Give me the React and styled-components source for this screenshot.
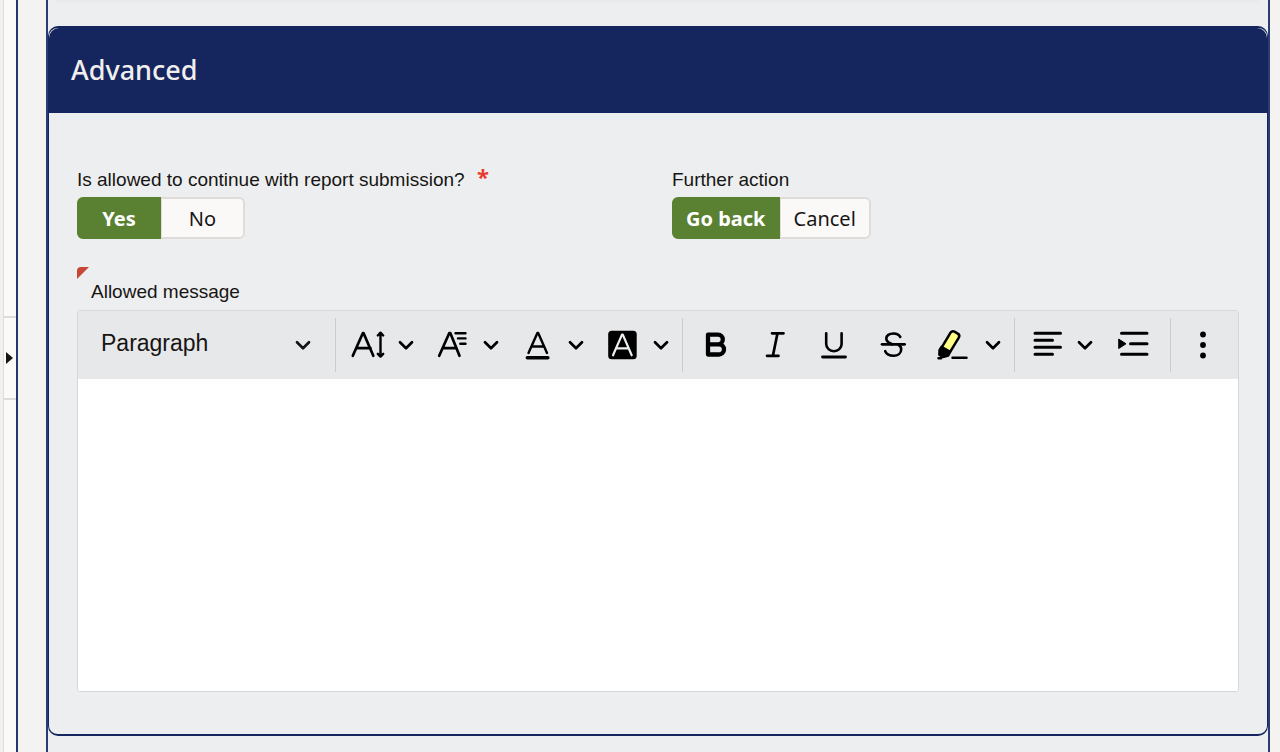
import React, { useState } from "react";
import styled, { createGlobalStyle, css } from "styled-components";

const navy = "#15255e";
const surface = "#edeef0";

const GlobalStyle = createGlobalStyle`
  *, *::before, *::after { box-sizing: border-box; }
  body {
    margin: 0;
    background: #f4f3f1;
    color: #161513;
    font-family: "Liberation Sans", Arial, sans-serif;
  }
`;

const Page = styled.div`
  display: flex;
  min-height: 100vh;
`;

const Splitter = styled.aside`
  flex: none;
  width: 16px;
  padding-top: 316px;
  padding-left: 3px;
  background: linear-gradient(to right, #f1f0ee 3px, #dddcd9 3px, #dddcd9 4px, #fbfaf8 4px);
`;

const Handle = styled.button`
  display: flex;
  align-items: center;
  width: 100%;
  height: 84px;
  padding: 0 0 0 2px;
  border: solid #dddcd9;
  border-width: 2px 0 2px 1px;
  background: #fbfaf8;
`;

const Main = styled.main`
  flex: 1;
  min-width: 0;
  padding: 0 10px 0 28px;
  border-left: 2px solid #26366c;
`;

const Region = styled.div`
  display: flow-root;
  min-height: 100vh;
  padding-bottom: 16px;
  border: solid #2c3b72;
  border-width: 0 2px;
  background: ${surface};
`;

const PreviousEdge = styled.div`
  height: 5px;
  margin: 0 8px 21px;
  background: linear-gradient(#e8e9eb, ${surface});
`;

const Card = styled.section`
  border: solid ${navy};
  border-width: 2px 1px;
  border-radius: 10px;
  background: ${surface};
`;

const CardHeader = styled.header`
  display: flex;
  align-items: center;
  height: 85px;
  padding: 0 22px 2px;
  border-radius: 10px 10px 0 0;
  background: ${navy};
`;

const Title = styled.h2`
  margin: 0;
  color: #f1efed;
  font: 500 27px/40px "Noto Sans", sans-serif;
`;

const CardBody = styled.form`
  padding: 55px 28px 42px;
`;

const FieldRow = styled.div`
  display: grid;
  grid-template-columns: 1fr 1fr;
  gap: 28px;
`;

const Field = styled.fieldset`
  min-width: 0;
  margin: 0;
  padding: 0;
  border: 0;
`;

const labelText = css`
  padding: 0;
  color: #161513;
  font-size: 19px;
  line-height: 24px;
`;

const Legend = styled.legend`
  ${labelText}
  margin-bottom: 5px;
`;

const Required = styled.span`
  margin-left: 7px;
  color: #e8392b;
  font: 700 22px/0 "Noto Sans", sans-serif;
  vertical-align: 1px;
`;

const Pills = styled.div`
  display: flex;
`;

const Pill = styled.label`
  display: flex;
  align-items: center;
  justify-content: center;
  min-width: 84px;
  height: 42px;
  padding: 2px ${(p) => (p.$first ? 12 : 13)}px 0;
  border: 2px solid ${(p) => (p.$checked ? "#5a8132" : "#dfdcd9")};
  border-left-width: ${(p) => (p.$first ? 2 : 1)}px;
  border-radius: ${(p) => (p.$first ? "6px 0 0 6px" : "0 6px 6px 0")};
  background: ${(p) => (p.$checked ? "#5a8132" : "#fbf9f8")};
  color: ${(p) => (p.$checked ? "#fff" : "#161513")};
  font: ${(p) => (p.$checked ? 700 : 400)} 20px/28px "Noto Sans", sans-serif;
  cursor: pointer;
`;

const HiddenRadio = styled.input`
  position: absolute;
  opacity: 0;
  pointer-events: none;
`;

const MessageField = styled.div`
  padding-top: 28px;
`;

const RequiredCorner = styled.div`
  width: 12px;
  height: 12px;
  border-radius: 4px 0 0 0;
  background: #c74634;
  clip-path: polygon(0 0, 100% 0, 0 100%);
`;

const MessageLabel = styled.label`
  ${labelText}
  display: block;
  margin: 1px 14px 6px;
`;

const Editor = styled.div`
  overflow: hidden;
  border: 1px solid #d6d7d9;
  border-radius: 3px;
  background: #fff;
`;

const Toolbar = styled.div`
  display: flex;
  height: 68px;
  padding: 7px 0;
  background: #e7e8ea;
`;

const Group = styled.div`
  display: flex;
  height: 54px;
  padding: 0 ${(p) => (p.$last ? 5 : 3)}px 0 3px;
  border-left: 1px solid #cbccd0;
  margin-left: ${(p) => (p.$last ? "auto" : 0)};
`;

const SelectBox = styled.div`
  display: flex;
  align-items: center;
  width: 257px;
  padding-right: 24px;
`;

const FormatSelect = styled.select`
  flex: 1;
  height: 54px;
  padding: 0 0 4px 23px;
  border: 0;
  appearance: none;
  background: transparent;
  color: #161513;
  font: 23px/32px "Liberation Sans", Arial, sans-serif;
`;

const Tool = styled.button`
  display: flex;
  align-items: center;
  justify-content: ${(p) => (p.$menu ? "flex-start" : "center")};
  gap: 13px;
  width: ${(p) => (p.$menu ? "auto" : "59px")};
  padding: ${(p) => (p.$menu ? "0 10px 0 12px" : "0")};
  border: 0;
  background: transparent;
  color: #000;
`;

const MessageArea = styled.textarea`
  display: block;
  width: 100%;
  height: 312px;
  padding: 16px 22px;
  border: 0;
  outline: 0;
  resize: none;
  background: #fff;
  font: 19px/28px "Liberation Sans", Arial, sans-serif;
`;

const Glyph = styled.svg`
  display: block;
  flex: none;
  fill: none;
  stroke: currentColor;
  stroke-width: 2.7;
  stroke-linecap: round;
  stroke-linejoin: round;
`;

function Icon({ width = 34, children }) {
  return (
    <Glyph width={width} height="34" viewBox={`0 0 ${width} 34`} aria-hidden="true">
      {children}
    </Glyph>
  );
}

function Chevron() {
  return (
    <Glyph width="16" height="16" viewBox="0 0 16 16" aria-hidden="true">
      <path d="M2 5.3l6 6 6-6" strokeWidth="2.7" />
    </Glyph>
  );
}

const icons = {
  size: (
    <Icon>
      <path d="M1.8 27.8L11.8 5.2h.8L22.3 27.8M5.5 20.2h14" />
      <path d="M29.5 5.5v22M26.8 7.5l2.7-2.8 2.7 2.8M26.8 25.8l2.7 2.8 2.7-2.8" strokeWidth="2.4" />
    </Icon>
  ),
  family: (
    <Icon>
      <path d="M3.2 27.8L13.2 5.2h1.2L23.5 27.8M6.8 20.2h13.5" />
      <path d="M19.5 5.2h10M22 10.4h7.5M24.3 15.7h5.2" strokeWidth="2.4" />
    </Icon>
  ),
  color: (
    <Icon>
      <path d="M7.5 25L16.4 5h.8L26 25M10.5 18.5h12.5" strokeWidth="2.4" />
      <path d="M6.3 29.7h20.6" strokeWidth="3.4" />
    </Icon>
  ),
  background: (
    <Icon>
      <rect x="2.2" y="2.7" width="28.5" height="28.5" rx="3.5" fill="currentColor" stroke="none" />
      <path d="M7 27.3L16 6.6h.8L25.7 27.3M10.2 20.3h12.5" stroke="#eeeff1" strokeWidth="2.2" />
    </Icon>
  ),
  bold: (
    <Icon>
      <path d="M9 6.7h10a4.7 4.7 0 0 1 0 9.6H9zM9 16.3h10.9a5 5 0 0 1 0 10.2H9z" strokeWidth="4.3" />
    </Icon>
  ),
  italic: (
    <Icon>
      <path d="M14 5.3h11.5M9 27.8h11.5M19.5 5.3l-4.6 22.5" strokeWidth="2.7" />
    </Icon>
  ),
  underline: (
    <Icon>
      <path d="M9.2 5.3v10.7a7.7 7.3 0 0 0 15.4 0V5.3" strokeWidth="2.6" />
      <path d="M5.5 29h23" strokeWidth="2.8" />
    </Icon>
  ),
  strike: (
    <Icon>
      <path d="M24.3 9C23 6.8 20.6 5.5 17.5 5.5c-4.3 0-7.2 2-7.2 5 0 2.4 2 4.3 6 5.8M22.5 16.8c1.8 1 2.7 2.4 2.7 4.4 0 4-3.3 6.6-7.6 6.6-4 0-7.1-1.6-8.4-4.6" strokeWidth="2.6" />
      <path d="M6 16.3h22.6" />
    </Icon>
  ),
  highlight: (
    <Icon width={38}>
      <path d="M7.3 20.2L16.4 4.8c.8-1.4 2.6-1.9 4-1.1l3.4 2c1.4.8 1.8 2.5 1 3.9L16 24.2z" fill="#ffff86" strokeWidth="2.5" />
      <path d="M7.5 18.5l8.9 5.1-2 4.3-5.3 1.4-4-2.4.2-4.8z" fill="currentColor" strokeWidth="2" />
      <path d="M4.5 30.3h2.6M18.5 29.8h14" strokeWidth="2.5" />
    </Icon>
  ),
  align: (
    <Icon>
      <path d="M5 5.3h25.5M5 12.3h17.5M5 19.3h25.5M5 26.3h17.5" strokeWidth="3" />
    </Icon>
  ),
  indent: (
    <Icon>
      <path d="M5.5 5.3h25.5M14.5 15.8h16.5M5.5 26.3h25.5" strokeWidth="3" />
      <path d="M3 11.3l7 4.5-7 4.5z" fill="currentColor" strokeWidth="1" />
    </Icon>
  ),
  more: (
    <Icon>
      <g fill="currentColor" stroke="none">
        <circle cx="16" cy="6.5" r="2.9" />
        <circle cx="16" cy="17" r="2.9" />
        <circle cx="16" cy="27.5" r="2.9" />
      </g>
    </Icon>
  ),
};

function ToolButton({ icon, label, menu }) {
  return (
    <Tool type="button" aria-label={label} aria-haspopup={menu ? "menu" : undefined} $menu={menu}>
      {icons[icon]}
      {menu && <Chevron />}
    </Tool>
  );
}

function PillGroup({ name, options }) {
  const [value, setValue] = useState(options[0]);
  return (
    <Pills>
      {options.map((option, i) => (
        <Pill key={option} $first={i === 0} $checked={value === option}>
          <HiddenRadio
            type="radio"
            name={name}
            value={option}
            checked={value === option}
            onChange={() => setValue(option)}
          />
          {option}
        </Pill>
      ))}
    </Pills>
  );
}

export default function App() {
  return (
    <>
      <GlobalStyle />
      <Page>
        <Splitter>
          <Handle type="button" aria-label="Expand navigation">
            <svg width="8" height="14" viewBox="0 0 8 14" aria-hidden="true">
              <path d="M0 1l7 6-7 6z" fill="#161513" />
            </svg>
          </Handle>
        </Splitter>
        <Main>
          <Region>
            <PreviousEdge />
            <Card>
              <CardHeader>
                <Title>Advanced</Title>
              </CardHeader>
              <CardBody>
                <FieldRow>
                  <Field>
                    <Legend>
                      Is allowed to continue with report submission? <Required>*</Required>
                    </Legend>
                    <PillGroup name="allowed" options={["Yes", "No"]} />
                  </Field>
                  <Field>
                    <Legend>Further action</Legend>
                    <PillGroup name="action" options={["Go back", "Cancel"]} />
                  </Field>
                </FieldRow>
                <MessageField>
                  <RequiredCorner />
                  <MessageLabel htmlFor="message">Allowed message</MessageLabel>
                  <Editor>
                    <Toolbar role="toolbar" aria-label="Formatting">
                      <SelectBox>
                        <FormatSelect aria-label="Paragraph style" defaultValue="Paragraph">
                          <option>Paragraph</option>
                        </FormatSelect>
                        <Chevron />
                      </SelectBox>
                      <Group>
                        <ToolButton icon="size" label="Font size" menu />
                        <ToolButton icon="family" label="Font family" menu />
                        <ToolButton icon="color" label="Font color" menu />
                        <ToolButton icon="background" label="Background color" menu />
                      </Group>
                      <Group>
                        <ToolButton icon="bold" label="Bold" />
                        <ToolButton icon="italic" label="Italic" />
                        <ToolButton icon="underline" label="Underline" />
                        <ToolButton icon="strike" label="Strikethrough" />
                        <ToolButton icon="highlight" label="Highlight" menu />
                      </Group>
                      <Group>
                        <ToolButton icon="align" label="Text alignment" menu />
                        <ToolButton icon="indent" label="Increase indent" />
                      </Group>
                      <Group $last>
                        <ToolButton icon="more" label="Show more items" />
                      </Group>
                    </Toolbar>
                    <MessageArea id="message" />
                  </Editor>
                </MessageField>
              </CardBody>
            </Card>
          </Region>
        </Main>
      </Page>
    </>
  );
}
